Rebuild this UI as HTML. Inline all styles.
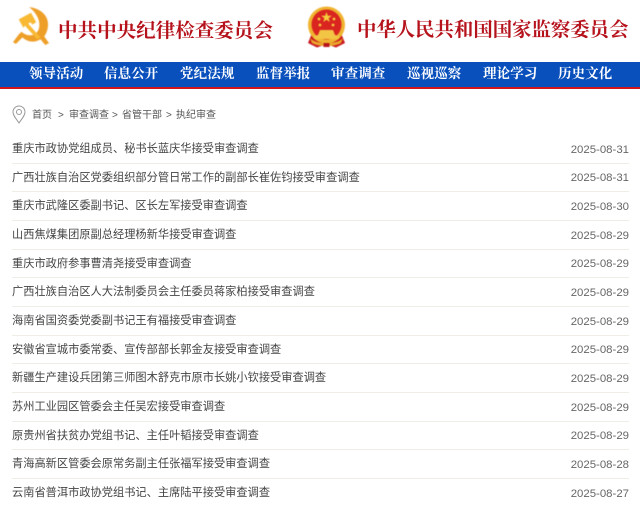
<!DOCTYPE html>
<html lang="zh-CN">
<head>
<meta charset="utf-8">
<title>执纪审查</title>
<style>
html,body{margin:0;padding:0;background:#fff;}
body{width:640px;height:505px;overflow:hidden;position:relative;font-family:"Liberation Sans","Noto Sans CJK SC",sans-serif;}
.abs{position:absolute;white-space:nowrap;}
.h{font-family:"Liberation Serif","Noto Serif CJK SC",serif;font-weight:700;color:#b5121b;line-height:24px;filter:blur(.3px);}
.nav{position:absolute;left:0;top:62px;width:640px;height:25px;background:#0a50bc;}
.red{position:absolute;left:0;top:87px;width:640px;height:2px;background:#d3141c;}
.n{position:absolute;top:63px;line-height:22px;font-family:"Liberation Serif","Noto Serif CJK SC",serif;font-weight:700;font-size:13.5px;color:#fff;white-space:nowrap;letter-spacing:.1px;filter:blur(.3px);}
.crumb{position:absolute;top:109px;font-size:10px;line-height:14px;color:#555;white-space:nowrap;filter:blur(.25px);}
.t{position:absolute;left:12px;font-size:11.22px;line-height:16px;color:#444;white-space:nowrap;filter:blur(.25px);}
.d{position:absolute;right:11px;font-size:11.4px;line-height:16px;color:#666;white-space:nowrap;filter:blur(.2px);}
.l{position:absolute;left:12px;width:617px;height:1px;background:#f0ece6;}
</style>
</head>
<body>
<svg class="abs" style="left:13px;top:7px;filter:blur(.4px)" width="36" height="39" viewBox="0 0 38 41">
<path d="M17 0C28 1 37 8 37 18C37 24 35 28 33 31L38 38L34 40L29 34C23 38 15 37 10 32L3 39L0 37L6 29L9 26C13 30 20 31 24 28C30 23 30 10 17 0Z" fill="#ee9f28"/>
<path d="M6 13L19 6L24.500 16L20.500 18.500L18.500 16L16 17.500L29 32L25.500 34L12.500 19.500L11 22Z" fill="#f8b934"/>
</svg>
<div class="abs h" style="left:58px;top:20px;font-size:19.55px;">中共中央纪律检查委员会</div>

<svg class="abs" style="left:307px;top:6px;filter:blur(.4px)" width="39" height="42" viewBox="0 0 39 42">
<path d="M5 27L1 37L10 41.500L19.500 38L29 41.500L38 37L34 27Z" fill="#c9181d"/>
<circle cx="19.500" cy="19" r="18.500" fill="#efb42f"/>
<circle cx="19.500" cy="18.500" r="15" fill="#d92420"/>
<path d="M19.500 6l1.300 3.800h4l-3.200 2.400 1.200 3.800-3.300-2.300-3.300 2.300 1.200-3.800-3.200-2.400h4z" fill="#f6cf3d"/>
<circle cx="12" cy="13" r="1.400" fill="#f6cf3d"/><circle cx="27" cy="13" r="1.400" fill="#f6cf3d"/>
<circle cx="13" cy="19" r="1.400" fill="#f6cf3d"/><circle cx="26" cy="19" r="1.400" fill="#f6cf3d"/>
<path d="M11 29L13 24H26L28 29L32 30V33H7V30Z" fill="#f3c544"/>
<path d="M3 32C9 39 30 39 36 32L34 37C27 41 12 41 5 37Z" fill="#eaa92a"/>
<path d="M16.500 37h6v4h-6z" fill="#b8141a"/>
</svg>
<div class="abs h" style="left:357px;top:19px;font-size:19.4px;">中华人民共和国国家监察委员会</div>

<div class="nav"></div><div class="red"></div>
<div class="n" style="left:29px">领导活动</div>
<div class="n" style="left:104px">信息公开</div>
<div class="n" style="left:180px">党纪法规</div>
<div class="n" style="left:256px">监督举报</div>
<div class="n" style="left:331px">审查调查</div>
<div class="n" style="left:407px">巡视巡察</div>
<div class="n" style="left:483px">理论学习</div>
<div class="n" style="left:558px">历史文化</div>

<svg class="abs" style="left:12px;top:105px" width="14" height="19" viewBox="0 0 14 19">
<path d="M7 18C4 13.500 1 10.500 1 7A6 6 0 0 1 13 7C13 10.500 10 13.500 7 18Z" fill="none" stroke="#999" stroke-width="1"/>
<circle cx="7" cy="7" r="2.500" fill="none" stroke="#999" stroke-width="1"/>
</svg>
<div class="crumb" style="left:32px">首页</div>
<div class="crumb" style="left:58px">&gt;</div>
<div class="crumb" style="left:69px">审查调查</div>
<div class="crumb" style="left:112px">&gt;</div>
<div class="crumb" style="left:122px">省管干部</div>
<div class="crumb" style="left:166px">&gt;</div>
<div class="crumb" style="left:176px">执纪审查</div>

<div class="t" style="top:141px">重庆市政协党组成员、秘书长蓝庆华接受审查调查</div><div class="d" style="top:142px">2025-08-31</div><div class="l" style="top:163px"></div>
<div class="t" style="top:170px">广西壮族自治区党委组织部分管日常工作的副部长崔佐钧接受审查调查</div><div class="d" style="top:170px">2025-08-31</div><div class="l" style="top:191px"></div>
<div class="t" style="top:198px">重庆市武隆区委副书记、区长左军接受审查调查</div><div class="d" style="top:199px">2025-08-30</div><div class="l" style="top:220px"></div>
<div class="t" style="top:227px">山西焦煤集团原副总经理杨新华接受审查调查</div><div class="d" style="top:228px">2025-08-29</div><div class="l" style="top:249px"></div>
<div class="t" style="top:256px">重庆市政府参事曹清尧接受审查调查</div><div class="d" style="top:256px">2025-08-29</div><div class="l" style="top:277px"></div>
<div class="t" style="top:284px">广西壮族自治区人大法制委员会主任委员蒋家柏接受审查调查</div><div class="d" style="top:285px">2025-08-29</div><div class="l" style="top:306px"></div>
<div class="t" style="top:313px">海南省国资委党委副书记王有福接受审查调查</div><div class="d" style="top:314px">2025-08-29</div><div class="l" style="top:335px"></div>
<div class="t" style="top:342px">安徽省宣城市委常委、宣传部部长郭金友接受审查调查</div><div class="d" style="top:342px">2025-08-29</div><div class="l" style="top:363px"></div>
<div class="t" style="top:370px">新疆生产建设兵团第三师图木舒克市原市长姚小钦接受审查调查</div><div class="d" style="top:371px">2025-08-29</div><div class="l" style="top:392px"></div>
<div class="t" style="top:399px">苏州工业园区管委会主任吴宏接受审查调查</div><div class="d" style="top:400px">2025-08-29</div><div class="l" style="top:421px"></div>
<div class="t" style="top:428px">原贵州省扶贫办党组书记、主任叶韬接受审查调查</div><div class="d" style="top:428px">2025-08-29</div><div class="l" style="top:449px"></div>
<div class="t" style="top:456px">青海高新区管委会原常务副主任张福军接受审查调查</div><div class="d" style="top:457px">2025-08-28</div><div class="l" style="top:478px"></div>
<div class="t" style="top:485px">云南省普洱市政协党组书记、主席陆平接受审查调查</div><div class="d" style="top:486px">2025-08-27</div>
</body>
</html>
